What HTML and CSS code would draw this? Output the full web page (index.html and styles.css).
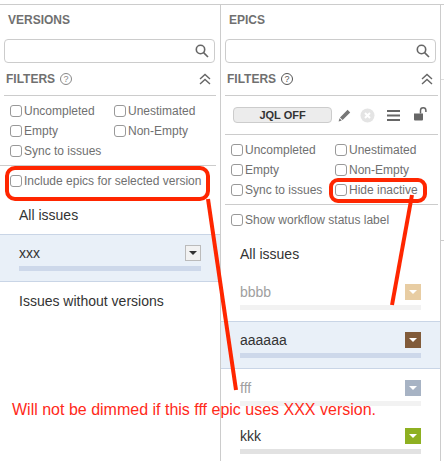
FILE: index.html
```html
<!DOCTYPE html>
<html lang="en">
<head>
    <meta charset="utf-8">
    <meta name="viewport" content="width=device-width, initial-scale=1">
    <title>Versions and epics</title>
    <link rel="stylesheet" href="styles.css">
</head>
<body>
<div class="board">

    <!-- versions column -->
    <section class="panel panel-versions">
        <h2 class="panel-title">VERSIONS</h2>
        <div class="search">
            <svg class="search-icon" width="14" height="14" viewBox="0 0 14 14"><circle cx="5.5" cy="5.5" r="4.2"/><line x1="8.6" y1="8.6" x2="13" y2="13"/></svg>
        </div>
        <div class="filters-head">
            <span class="filters-label">FILTERS</span>
            <span class="help help-light">?</span>
            <svg class="collapse" width="14" height="12" viewBox="0 0 14 12"><polyline points="2,6 7,1.5 12,6"/><polyline points="2,11 7,6.5 12,11"/></svg>
        </div>
        <div class="checks">
            <label class="check"><input type="checkbox">Uncompleted</label>
            <label class="check"><input type="checkbox">Unestimated</label>
            <label class="check"><input type="checkbox">Empty</label>
            <label class="check"><input type="checkbox">Non-Empty</label>
            <label class="check"><input type="checkbox">Sync to issues</label>
        </div>
        <div class="single-check">
            <label class="check"><input type="checkbox">Include epics for selected version</label>
        </div>
        <div class="item item-short"><span class="item-name">All issues</span></div>
        <div class="item selected">
            <div class="item-top">
                <span class="item-name">xxx</span>
                <span class="drop drop-plain"></span>
            </div>
            <div class="bar"></div>
        </div>
        <div class="item"><span class="item-name">Issues without versions</span></div>
    </section>

    <!-- epics column -->
    <section class="panel panel-epics">
        <h2 class="panel-title">EPICS</h2>
        <div class="search">
            <svg class="search-icon" width="14" height="14" viewBox="0 0 14 14"><circle cx="5.5" cy="5.5" r="4.2"/><line x1="8.6" y1="8.6" x2="13" y2="13"/></svg>
        </div>
        <div class="filters-head">
            <span class="filters-label">FILTERS</span>
            <span class="help">?</span>
            <svg class="collapse" width="14" height="12" viewBox="0 0 14 12"><polyline points="2,6 7,1.5 12,6"/><polyline points="2,11 7,6.5 12,11"/></svg>
        </div>
        <div class="jql-row">
            <span class="jql-btn">JQL OFF</span>
            <svg class="jql-icon icon-pencil" width="13" height="13" viewBox="0 0 13 13"><path d="M9.6 .8l2.6 2.6-7.6 7.6-2.6-2.6zM1.5 9.2l2.3 2.3-3.2 .9z" fill="#777"/></svg>
            <svg class="jql-icon icon-clear" width="15" height="15" viewBox="0 0 15 15"><circle cx="7.5" cy="7.5" r="7" fill="#e4e4e4"/><path d="M5 5l5 5M10 5l-5 5" stroke="#fff" stroke-width="2"/></svg>
            <svg class="jql-icon icon-menu" width="13" height="11" viewBox="0 0 13 11"><path d="M0 0h13v2H0zM0 4.500h13v2H0zM0 9h13v2H0z" fill="#666"/></svg>
            <svg class="jql-icon icon-lock" width="14" height="14" viewBox="0 0 14 14"><path d="M0 6.500h9v6a1 1 0 0 1-1 1H1a1 1 0 0 1-1-1z" fill="#666"/><path d="M6.500 6.500V3.500a2.700 2.700 0 0 1 5.400 0V5" fill="none" stroke="#666" stroke-width="1.500"/></svg>
        </div>
        <div class="checks checks-epics">
            <label class="check"><input type="checkbox">Uncompleted</label>
            <label class="check"><input type="checkbox">Unestimated</label>
            <label class="check"><input type="checkbox">Empty</label>
            <label class="check"><input type="checkbox">Non-Empty</label>
            <label class="check"><input type="checkbox">Sync to issues</label>
            <label class="check"><input type="checkbox">Hide inactive</label>
        </div>
        <div class="single-check">
            <label class="check"><input type="checkbox">Show workflow status label</label>
        </div>
        <div class="item item-short"><span class="item-name">All issues</span></div>
        <div class="item dimmed">
            <div class="item-top">
                <span class="item-name">bbbb</span>
                <span class="drop tan"></span>
            </div>
            <div class="bar"></div>
        </div>
        <div class="item selected">
            <div class="item-top">
                <span class="item-name">aaaaaa</span>
                <span class="drop brown"></span>
            </div>
            <div class="bar"></div>
        </div>
        <div class="item dimmed">
            <div class="item-top">
                <span class="item-name">fff</span>
                <span class="drop slate"></span>
            </div>
            <div class="bar"></div>
        </div>
        <div class="item">
            <div class="item-top">
                <span class="item-name">kkk</span>
                <span class="drop green"></span>
            </div>
            <div class="bar"></div>
        </div>
    </section>

    <!-- edge of the next column -->
    <div class="next-col"></div>
</div>

<!-- red notes drawn on top of the screenshot -->
<svg class="marks" width="444" height="461" viewBox="0 0 444 461">
    <rect x="7" y="168" width="201" height="31" rx="8"/>
    <rect x="331" y="180" width="94" height="21" rx="7"/>
    <path d="M208 199L236 390"/>
    <path d="M412 195L392 305"/>
</svg>
<p class="note">Will not be dimmed if this fff epic uses XXX version.</p>
</body>
</html>
```

FILE: styles.css
```css
html, body {
    margin: 0;
    padding: 0;
    background: #fff;
}
body {
    position: relative;
    width: 444px;
    height: 461px;
    overflow: hidden;
    font-family: "Liberation Sans", Arial, sans-serif;
    color: #707070;
}

.board {
    display: flex;
    margin-top: 4px;
    height: 457px;
    border-top: 1px solid #ccc;
    box-sizing: border-box;
    overflow: hidden;
}
.panel {
    flex: none;
    box-sizing: border-box;
    border-right: 1px solid #ccc;
}
.panel-versions { width: 221px; }
.panel-epics { width: 220px; }
.next-col {
    flex: 1;
    height: 160px;
    margin-top: 74px;
    border-top: 1px solid #ddd;
    border-bottom: 1px solid #ccc;
}

.panel-title {
    height: 34px;
    margin: 0;
    padding-left: 8px;
    font-size: 12px;
    line-height: 30px;
    font-weight: bold;
    color: #707070;
}

.search {
    display: flex;
    align-items: center;
    justify-content: flex-end;
    box-sizing: border-box;
    height: 24px;
    margin: 0 5px 0 4px;
    padding-right: 5px;
    border: 1px solid #ccc;
    border-radius: 4px;
}
.search-icon {
    fill: none;
    stroke: #666;
    stroke-width: 1.6;
}

.filters-head {
    display: flex;
    align-items: center;
    box-sizing: border-box;
    height: 33px;
    margin: 0 4px;
    padding: 0 2px;
    border-bottom: 1px solid #ccc;
}
.filters-label {
    font-size: 12px;
    font-weight: bold;
}
.help {
    box-sizing: border-box;
    width: 12px;
    height: 12px;
    margin-left: 5px;
    border: 1px solid #555;
    border-radius: 50%;
    font-size: 9px;
    line-height: 10px;
    text-align: center;
    color: #555;
}
.help-light {
    border-color: #888;
    color: #888;
}
.collapse {
    margin-left: auto;
    margin-right: 2px;
    fill: none;
    stroke: #666;
    stroke-width: 1.4;
}

.checks {
    display: grid;
    grid-template-columns: 104px 1fr;
    grid-auto-rows: 20px;
    padding: 5px 0 4px 10px;
    margin: 0 4px 0 0;
    border-bottom: 1px solid #ccc;
}
.panel-epics .checks,
.panel-epics .filters-head,
.panel-epics .jql-row,
.panel-epics .single-check {
    margin-left: 4px;
    margin-right: 2px;
}
.panel-epics .checks,
.panel-epics .single-check {
    padding-left: 6px;
}
.panel-epics .search { margin-right: 4px; }

.check {
    display: flex;
    align-items: center;
    font-size: 12px;
    white-space: nowrap;
}
.check input {
    appearance: none;
    flex: none;
    box-sizing: border-box;
    width: 12px;
    height: 12px;
    margin: 0 2px 0 0;
    border: 1px solid #999;
    border-radius: 3px;
    background: #fff;
}

.single-check {
    display: flex;
    align-items: center;
    height: 30px;
    padding-left: 10px;
}

.jql-row {
    display: flex;
    align-items: center;
    box-sizing: border-box;
    height: 39px;
    padding-left: 8px;
    border-bottom: 1px solid #ccc;
}
.jql-btn {
    box-sizing: border-box;
    width: 99px;
    height: 16px;
    margin-right: 6px;
    border: 1px solid #ccc;
    border-radius: 4px;
    background: #ececec;
    font-size: 11px;
    font-weight: bold;
    line-height: 14px;
    text-align: center;
    color: #333;
}
.jql-icon { flex: none; }
.icon-pencil { margin-right: 9px; }
.icon-clear { margin-right: 12px; }
.icon-menu { margin-right: 14px; }
.icon-lock { margin-top: -3px; }

.item {
    box-sizing: border-box;
    height: 48px;
    padding: 10px 19px 0;
    font-size: 14px;
    color: #333;
}
.item-short {
    height: 38px;
}
.item > .item-name {
    display: block;
    line-height: 18px;
}
.item-top {
    display: flex;
    align-items: center;
    justify-content: space-between;
    height: 18px;
}
.bar {
    height: 5px;
    margin-top: 4px;
    background: #e2e2e2;
}

.selected {
    border-top: 1px solid #c9d5e6;
    border-bottom: 1px solid #c9d5e6;
    background: #e9f0f8;
    padding-top: 9px;
}
.selected .bar { background: #cdd8ea; }

.dimmed { color: #a0a0a0; }
.dimmed .bar { background: #f2f2f2; }

.drop {
    position: relative;
    box-sizing: border-box;
    width: 16px;
    height: 16px;
}
.drop::after {
    content: "";
    position: absolute;
    left: 50%;
    top: 50%;
    margin: -2px 0 0 -4px;
    border-left: 4px solid transparent;
    border-right: 4px solid transparent;
    border-top: 4px solid #fff;
}
.drop-plain {
    border: 1px solid #bbb;
    background: #f2f2f2;
}
.drop-plain::after { border-top-color: #333; }
.tan { background: #e8cda3; }
.brown { background: #815b3a; }
.slate { background: #a7b3c4; }
.green { background: #8eb021; }

.marks {
    position: absolute;
    left: 0;
    top: 0;
    fill: none;
    stroke: #ff2600;
    stroke-width: 4;
}
.note {
    position: absolute;
    left: 12px;
    top: 401px;
    margin: 0;
    font-size: 16px;
    line-height: 18px;
    white-space: nowrap;
    color: #ff2a1a;
}
```
